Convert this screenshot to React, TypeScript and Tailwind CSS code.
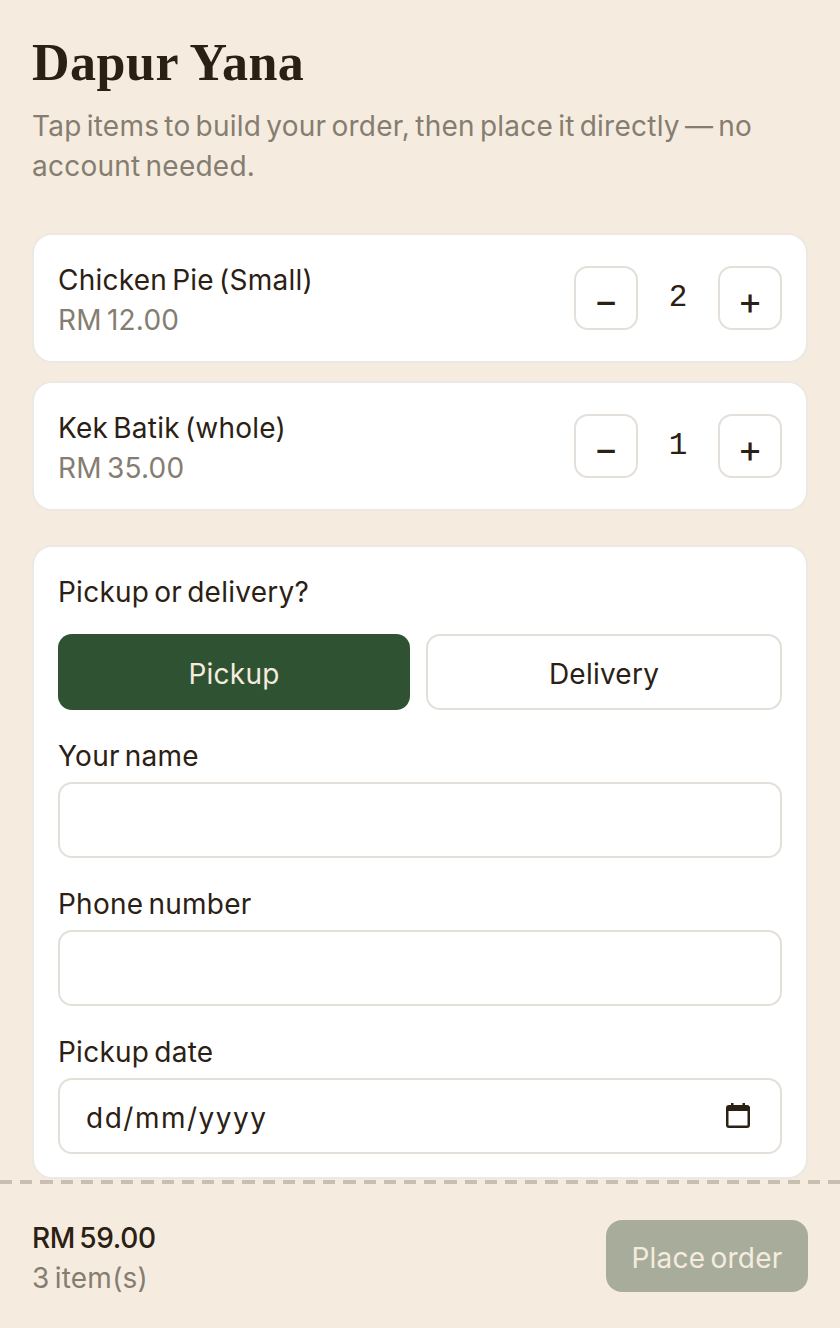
const sans = "font-['Inter','Open_Sans',sans-serif]";
const text = "text-[28px] leading-10 tracking-[0.24px] [word-spacing:-3px]";

function Stepper({ qty }: { qty: number }) {
  const btn =
    "w-16 h-16 rounded-[14px] border-2 border-[#e4dfd9] bg-white flex items-center justify-center text-[#2b2014] text-[38px] font-normal leading-none pt-1";
  return (
    <div className="flex items-center">
      <button className={btn}>−</button>
      <span className="w-20 text-center font-['Liberation_Mono',monospace] text-[31px] leading-8 text-[#2b2014]">
        {qty}
      </span>
      <button className={btn}>+</button>
    </div>
  );
}

function Item({ name, price, qty }: { name: string; price: string; qty: number }) {
  return (
    <div className="h-[130px] rounded-[20px] border-2 border-[#ece8e3] bg-white px-6 flex items-center justify-between">
      <div className="pt-1">
        <div className={`${text} text-[#2b2014]`}>{name}</div>
        <div className={`${text} text-[#857d71]`}>{price}</div>
      </div>
      <Stepper qty={qty} />
    </div>
  );
}

function Field({ label, children }: { label: string; children?: React.ReactNode }) {
  return (
    <div className="flex flex-col">
      <div className={`${text} text-[#2b2014] mb-[6px]`}>{label}</div>
      <div className="h-[76px] rounded-[14px] border-2 border-[#e4dfd9] bg-white flex items-center justify-between pl-[26px] pr-[30px]">
        {children}
      </div>
    </div>
  );
}

export default function App() {
  return (
    <div className={`${sans} w-[840px] h-[1328px] bg-[#f5ecdf] flex flex-col overflow-hidden`}>
      <main className="flex-1 min-h-0 px-8 pt-[33px] overflow-hidden">
        <h1 className="font-['Liberation_Serif',serif] font-bold text-[52px] leading-[60px] tracking-[0.5px] text-[#2b2014]">
          Dapur Yana
        </h1>
        <p className={`mt-[13px] ${text} text-[#857d71]`}>
          Tap items to build your order, then place it directly — no account needed.
        </p>
        <div className="mt-[47px] flex flex-col gap-[18px]">
          <Item name="Chicken Pie (Small)" price="RM 12.00" qty={2} />
          <Item name="Kek Batik (whole)" price="RM 35.00" qty={1} />
        </div>
        <section className="mt-[34px] h-[634px] rounded-[20px] border-2 border-[#ece8e3] bg-white px-6 pt-[25px] flex flex-col">
          <div className={`${text} text-[#2b2014]`}>Pickup or delivery?</div>
          <div className="mt-[22px] flex gap-4">
            <button className={`w-[352px] h-[76px] rounded-[14px] bg-[#2f5233] text-[#f5ecdf] pt-[3px] ${text}`}>
              Pickup
            </button>
            <button className={`flex-1 h-[76px] rounded-[14px] border-2 border-[#e4dfd9] bg-white text-[#2b2014] pt-[3px] ${text}`}>
              Delivery
            </button>
          </div>
          <div className="mt-[26px] flex flex-col gap-[26px]">
            <Field label="Your name" />
            <Field label="Phone number" />
            <Field label="Pickup date">
              <span className="text-[28px] tracking-[1.5px] text-[#2b2014] pt-1">dd/mm/yyyy</span>
              <svg width="24" height="25" viewBox="0 0 24 25" className="mb-[1px]">
                <path
                  fillRule="evenodd"
                  d="M5 0h2.5v2h9V0H19v2h2a3 3 0 0 1 3 2v18a3 3 0 0 1-3 3H3a3 3 0 0 1-3-3V5a3 3 0 0 1 3-3h2V0zM2.5 8v14.5h19V8h-19z"
                  fill="#2b2014"
                />
              </svg>
            </Field>
          </div>
        </section>
      </main>
      <footer className="h-[148px] shrink-0 flex flex-col">
        <div className="h-1 bg-[repeating-linear-gradient(90deg,#c8bfb2_0_12.2px,transparent_12.2px_20.2px)]" />
        <div className="flex-1 px-8 flex items-center justify-between">
          <div className="pt-1">
            <div className="text-[28px] leading-10 tracking-[-0.3px] [word-spacing:-3px] font-medium text-[#2b2014]">RM 59.00</div>
            <div className={`${text} text-[#857d71]`}>3 item(s)</div>
          </div>
          <button className={`w-[202px] h-[72px] rounded-2xl bg-[#a8ad9b] text-[#f5ecdf] pt-[3px] ${text}`}>
            Place order
          </button>
        </div>
      </footer>
    </div>
  );
}
